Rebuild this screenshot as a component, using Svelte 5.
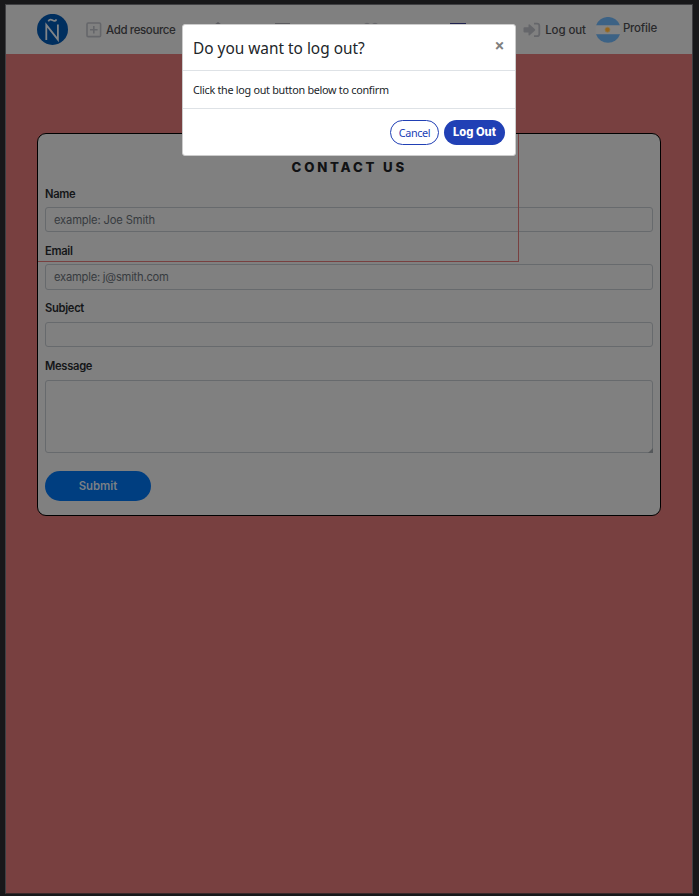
<script>
  const fields = [
    { id: 'name', label: 'Name', placeholder: 'example: Joe Smith' },
    { id: 'email', label: 'Email', placeholder: 'example: j@smith.com' },
    { id: 'subject', label: 'Subject', placeholder: '' }
  ];
</script>

<div class="frame">
  <div class="page">
    <header>
      <svg class="logo" width="32" height="32" viewBox="0 0 32 32">
        <circle cx="15.5" cy="15.4" r="15.5" fill="#002f5f" />
        <path d="M9.3 26V10.9L20.9 25.6V10.4" fill="none" stroke="#808487" stroke-width="1.8" />
        <path d="M11.3 7.3C12.6 4.9 14.4 5.6 15.6 6.3C17.2 7.3 18.7 7.2 19.4 5.4" fill="none" stroke="#808487" stroke-width="1.7" />
      </svg>
      <a class="add" href="#add">
        <svg width="16" height="16" viewBox="0 0 16 16" fill="none" stroke="#65666a">
          <rect x="1" y="1" width="13.6" height="13.6" rx="1.2" stroke-width="1.6" />
          <path d="M7.8 4v7.6M4 7.8h7.6" stroke-width="1.6" />
        </svg>
        <span>Add resource</span>
      </a>
      <svg class="hidden-icons" width="270" height="3" viewBox="0 0 270 3">
        <path d="M0 3L4 0L8 3Z" fill="#59595e" />
        <path d="M61 1h15v2h-15z" fill="#5b5b5f" />
        <path d="M150 3q3-3 6 0M158 3q3-3 6 0" fill="none" stroke="#66666a" stroke-width="1.5" />
        <path d="M236 1h16v2h-16z" fill="#20224f" />
      </svg>
      <a class="out" href="#logout">
        <svg width="18" height="16" viewBox="0 0 18 16">
          <path d="M0.5 6.2Q0.5 5.2 1.5 5.2H5.5V2.8Q5.7 1.7 6.7 2.4L12 7.2Q12.6 8 12 8.6L6.7 13.3Q5.7 13.9 5.5 12.9V10.5H1.5Q0.5 10.5 0.5 9.5Z" fill="#65666a" />
          <path d="M11 1.6H14Q16.3 1.6 16.3 3.8V12Q16.3 14.2 14 14.2H11" fill="none" stroke="#65666a" stroke-width="1.8" />
        </svg>
        <span>Log out</span>
      </a>
      <a class="profile" href="#profile">
        <svg width="26" height="26" viewBox="0 0 26 26">
          <path d="M1 8.5A12.7 12.7 0 0 1 25 8.5Z" fill="#3c6285" />
          <path d="M1 8.5H25Q26 13 25 17.2H1Q0 13 1 8.5Z" fill="#838383" />
          <path d="M1 17.2A12.7 12.7 0 0 0 25 17.2Z" fill="#3c6285" />
          <circle cx="12.5" cy="12.7" r="2.5" fill="#96651d" stroke="#8c784f" stroke-width=".8" />
        </svg>
        <span>Profile</span>
      </a>
    </header>

    <main>
      <form class="card">
        <h1>CONTACT US</h1>
        {#each fields as f}
          <div class="field">
            <label for={f.id}>{f.label}</label>
            <input id={f.id} class={f.id} placeholder={f.placeholder} />
          </div>
        {/each}
        <div class="field message">
          <label for="message">Message</label>
          <div class="area">
            <textarea id="message"></textarea>
            <svg class="grip" width="5" height="5" viewBox="0 0 5 5"><path d="M5 0V5H0Z" fill="#55585b" /></svg>
          </div>
        </div>
        <button type="button" class="submit">Submit</button>
        <div class="outline"></div>
      </form>
    </main>
  </div>

  <div class="modal" role="dialog" aria-modal="true">
    <div class="modal-head">
      <h2>Do you want to log out?</h2>
      <button type="button" class="close" aria-label="Close">×</button>
    </div>
    <p>Click the log out button below to confirm</p>
    <div class="modal-foot">
      <button type="button" class="cancel">Cancel</button>
      <button type="button" class="confirm">Log Out</button>
    </div>
  </div>
</div>

<style>
  :global(body) { margin: 0; background: #18181a; }
  * { box-sizing: border-box; }
  .frame {
    position: relative;
    width: 699px;
    height: 896px;
    padding: 4px 6px 2px 5px;
    background: #18181a;
    font-family: Inter, sans-serif;
    overflow: hidden;
  }
  .page {
    height: 890px;
    border: 1px solid #404043;
    border-bottom-color: #38292a;
    background: #784040;
    display: flex;
    flex-direction: column;
  }
  header {
    position: relative;
    height: 49px;
    flex: none;
    background: #808080;
    display: flex;
    align-items: center;
    padding-left: 31px;
  }
  header svg { flex: none; display: block; }
  header a {
    display: flex;
    align-items: center;
    color: #29292b;
    text-decoration: none;
    font-size: 11.5px;
    font-weight: 500;
    white-space: nowrap;
  }
  .add { margin-left: 17px; }
  .add span { margin-left: 4px; letter-spacing: -0.38px; }
  .hidden-icons { position: absolute; left: 208px; top: 17px; }
  .out { margin-left: auto; }
  .out span { margin-left: 4px; letter-spacing: -0.1px; }
  .profile { margin-left: 9px; margin-right: 35px; }
  .profile span { margin-left: 2px; margin-top: -3px; letter-spacing: -0.2px; }
  main { padding: 79px 31px 0; }
  .card {
    position: relative;
    height: 383px;
    border: 1px solid #000;
    border-radius: 9px;
    background: #808080;
    padding: 23px 7px 0;
  }
  h1 {
    margin: 0 0 16px;
    height: 20px;
    line-height: 20px;
    text-align: center;
    font-size: 13.2px;
    font-weight: 800;
    letter-spacing: 2.8px;
    text-indent: 0.5px;
    color: #111214;
  }
  .field { height: 57.4px; }
  .field.message { height: 105.8px; padding-top: 0.4px; }
  label {
    display: block;
    height: 14px;
    line-height: 14px;
    font-size: 11.2px;
    font-weight: 600;
    letter-spacing: -0.3px;
    color: #141618;
    position: relative;
    top: -6.4px;
  }
  input, textarea {
    display: block;
    width: 100%;
    height: 25px;
    margin: 0;
    border: 1px solid #676a6d;
    border-radius: 3px;
    padding: 0 8px;
    background: #808080;
    font: 400 11.2px Inter, sans-serif;
    letter-spacing: -0.15px;
    outline: none;
  }
  .email { height: 26px; letter-spacing: -0.23px; }
  input::placeholder { color: #373b3f; opacity: 1; }
  .area { position: relative; }
  textarea { height: 73px; resize: none; }
  .grip { position: absolute; right: 0; bottom: 0; }
  .submit {
    width: 106px;
    height: 30px;
    padding: 0;
    border: 0;
    border-radius: 15px;
    background: #003e80;
    color: #7b8085;
    font: 600 11.4px Inter, sans-serif;
  }
  .outline {
    position: absolute;
    left: 0;
    top: 0;
    width: 481px;
    height: 128px;
    border: solid #784040;
    border-width: 0 1px 1px 0;
    pointer-events: none;
  }
  .modal {
    position: absolute;
    left: 182px;
    top: 24px;
    width: 334px;
    height: 132px;
    border: 1px solid #ccc;
    border-radius: 3px;
    background: #fff;
    color: #212529;
    font-family: "Noto Sans", sans-serif;
  }
  .modal-head {
    height: 46px;
    border-bottom: 1px solid #dee2e6;
    display: flex;
    justify-content: space-between;
    padding: 0 9px 0 10px;
  }
  h2 { margin: 0; font-size: 15.4px; line-height: 48px; font-weight: 400; white-space: nowrap; }
  .close {
    border: 0;
    background: none;
    padding: 0;
    width: 13px;
    height: 41px;
    font: 700 17.5px/41px "Noto Sans", sans-serif;
    color: #7f7f7f;
  }
  p {
    margin: 0;
    height: 38px;
    line-height: 38px;
    padding-left: 10px;
    border-bottom: 1px solid #dee2e6;
    font-size: 10.8px;
    white-space: nowrap;
    letter-spacing: -0.28px;
  }
  .modal-foot { display: flex; justify-content: flex-end; gap: 5px; padding: 11px 10px 0; }
  .modal-foot button { height: 25px; border-radius: 13px; padding: 0; }
  .modal-foot .cancel {
    width: 49px;
    border: 1px solid #2140b5;
    background: #fff;
    color: #2140b5;
    font: 400 10.8px "Noto Sans", sans-serif;
    letter-spacing: -0.35px;
  }
  .modal-foot .confirm {
    width: 61px;
    border: 0;
    background: #2140b5;
    color: #fff;
    font: 800 11.2px Inter, sans-serif;
    padding-bottom: 1px;
  }
</style>
